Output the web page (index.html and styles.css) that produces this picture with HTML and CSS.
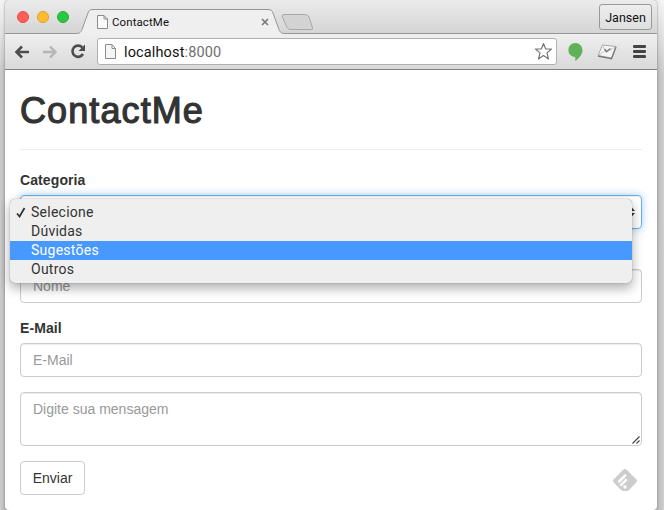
FILE: index.html
```html
<!DOCTYPE html>
<html lang="pt-BR">
<head>
<meta charset="utf-8">
<title>ContactMe</title>
<link rel="stylesheet" href="styles.css">
</head>
<body>
<div class="window">
  <header class="tabbar">
    <div class="lights"><i class="red"></i><i class="yellow"></i><i class="green"></i></div>
    <div class="tab">
      <svg class="tab-shape" width="212" height="26" viewBox="0 0 212 26">
        <path d="M-2 24.500C2 24.500 3 23 4 20.500L10 4C11 1.500 12 .5 15 .5H190C193 .5 194 1.500 195 4L201 20.500C202 23 203 24.500 207 24.500V26H-2Z" fill="#efefef"/>
        <path d="M-2 24.500C2 24.500 3 23 4 20.500L10 4C11 1.500 12 .5 15 .5H190C193 .5 194 1.500 195 4L201 20.500C202 23 203 24.500 207 24.500" fill="none" stroke="#969696"/>
      </svg>
      <svg class="doc" width="11" height="14" viewBox="0 0 11 14"><path d="M.5.500H7L10.500 4V13.500H.5ZM7 .5V4H10.500" fill="#fafafa" stroke="#8b8b8b"/></svg>
      <span class="tab-title">ContactMe</span>
      <svg class="close" width="8" height="8" viewBox="0 0 8 8"><path d="M1 1L7 7M7 1L1 7" stroke="#777" stroke-width="1.600"/></svg>
    </div>
    <svg class="newtab" width="34" height="17" viewBox="0 0 34 17"><path d="M3 .5H24Q27 .5 28 3L31.500 13.500Q32.500 15.500 30 15.500H10Q7 15.500 6 13.500L1.300 3Q.5.500 3 .5Z" fill="#d3d3d3" stroke="#a8a8a8"/></svg>
    <div class="profile">Jansen</div>
  </header>
  <nav class="toolbar">
    <svg class="back" width="16" height="14" viewBox="0 0 16 14"><path d="M15 7H3M8 1.500L2.500 7L8 12.500" fill="none" stroke="#4d4d4d" stroke-width="2.600"/></svg>
    <svg class="forward" width="16" height="14" viewBox="0 0 16 14"><path d="M1 7H13M8 1.500L13.500 7L8 12.500" fill="none" stroke="#b5b5b5" stroke-width="2.400"/></svg>
    <svg class="reload" width="16" height="15" viewBox="0 0 16 15"><path d="M12.300 3.500A5.600 5.600 0 1 0 13 10" fill="none" stroke="#4d4d4d" stroke-width="2.600"/><path d="M15 .5V7H8.500Z" fill="#4d4d4d"/></svg>
    <div class="address">
      <svg width="11" height="15" viewBox="0 0 11 15"><path d="M.5.500H7L10.500 4.500V14.500H.5ZM7 .5V4.500H10.500" fill="#f5f5f5" stroke="#8b8b8b"/></svg>
      <span class="url">localhost<span>:8000</span></span>
      <svg class="star" width="19" height="19" viewBox="0 0 19 19"><path d="M9.500 1.500L11.700 7H17.500L13 10.900L14.500 17L9.500 13.600L4.500 17L6 10.900L1.500 7H7.300Z" fill="#fff" stroke="#777" stroke-width="1.200" stroke-linejoin="round"/></svg>
    </div>
    <svg class="hangouts" width="15" height="18" viewBox="0 0 15 18"><path d="M7.300 0A7.100 7.100 0 0 1 14.500 7C14.500 11.500 11 15.500 7.300 18V14A7 7 0 0 1 7.300 0Z" fill="#60b157"/></svg>
    <svg class="mail" width="20" height="16" viewBox="0 0 20 16"><path d="M5.500 1L19 2.500L14.500 14L1 11.500Z" fill="#f4f4f4" stroke="#aaa"/><path d="M1 12L14.500 14.800L19 3" fill="none" stroke="#777" stroke-width="1.300"/><path d="M5.500 1L9 8.500L19 2.500M1 11.500L8 7" fill="none" stroke="#bbb" stroke-width=".7"/><path d="M7.500 5L9.500 7.500L13.500 4.500" fill="none" stroke="#777" stroke-width="1.300"/></svg>
    <svg class="menu" width="13" height="13" viewBox="0 0 13 13"><path d="M1.200 1.500H11.800M1.200 6.500H11.800M1.200 11.500H11.800" stroke="#464246" stroke-width="2.800" stroke-linecap="round"/></svg>
  </nav>
  <main>
    <h1>ContactMe</h1>
    <form>
      <div class="group">
        <label>Categoria</label>
        <div class="control select">
          <svg width="9" height="12" viewBox="0 0 9 12"><path d="M4.500 0L9 5H0ZM0 7H9L4.500 12Z" fill="#333"/></svg>
          <ul class="options">
            <li><svg class="check" width="10" height="11" viewBox="0 0 10 11"><path d="M1 6.500L3.600 9.500L8.500 1" fill="none" stroke="#333" stroke-width="1.800"/></svg>Selecione</li>
            <li>Dúvidas</li>
            <li class="active">Sugestões</li>
            <li>Outros</li>
          </ul>
        </div>
      </div>
      <div class="group covered">
        <div class="control">Nome</div>
      </div>
      <div class="group">
        <label>E-Mail</label>
        <div class="control">E-Mail</div>
      </div>
      <div class="group">
        <div class="control message">Digite sua mensagem
          <svg class="grip" width="8" height="8" viewBox="0 0 8 8"><path d="M.5 7.500L7.500.5M4.500 7.500L7.500 4.500" stroke="#444" stroke-width="1.200"/></svg>
        </div>
      </div>
      <div class="actions">
        <button type="button">Enviar</button>
        <svg width="24" height="22" viewBox="0 0 24 22"><path d="M10 1Q12 -.8 14 1L23.200 10.200Q24.600 12 23.200 13.500L16 21Q15 22 13.500 22H10.500Q9 22 8 21L.8 13.500Q-.6 12 .8 10.200Z" fill="#ccc"/><path d="M6 12.500L12.200 6.500M8 16L13 11.200" stroke="#fff" stroke-width="2.500" stroke-linecap="round"/><circle cx="12" cy="18" r="1.700" fill="#fff"/></svg>
      </div>
    </form>
  </main>
</div>
</body>
</html>
```
FILE: styles.css
```css
* { box-sizing: border-box; }
body {
  margin: 0;
  height: 510px;
  overflow: hidden;
  padding: 0 7px 0 5px;
  background: linear-gradient(90deg, #cdcdcd, #b8b8b8 5px, #b8b8b8 657px, #d0d0d0);
  font: 14px/20px "Liberation Sans", Arial, sans-serif;
  color: #333;
}
body::before {
  content: "";
  position: absolute;
  inset: 0 0 auto;
  height: 75px;
  background: linear-gradient(#fffc, #fff0);
}
.window {
  position: relative;
  height: 510px;
  background: #fff;
  border-radius: 5px 5px 4px 4px;
  box-shadow: 0 0 2px #777;
}
.tabbar {
  display: flex;
  height: 34px;
  background: linear-gradient(#ebebeb, #d5d5d5);
  border-bottom: 1px solid #969696;
  border-radius: 5px 5px 0 0;
}
.lights { display: flex; gap: 8px; padding: 11px 0 0 12px; width: 73px; }
.lights i { width: 12px; height: 12px; border-radius: 50%; }
.red { background: #ff5f57; border: 1px solid #e34b43; }
.yellow { background: #ffbd2e; border: 1px solid #dfa02b; }
.green { background: #28c940; border: 1px solid #24ad34; }
.tab {
  position: relative;
  display: flex;
  align-items: center;
  width: 208px;
  height: 26px;
  margin-top: 9px;
  padding: 0 17px 1px 19px;
  font: 11.400px/16px Roboto, sans-serif;
  color: #111;
}
.tab-shape { position: absolute; left: 0; top: 0; overflow: visible; }
.tab .doc, .tab-title, .close { position: relative; }
.tab-title { margin-left: 4px; letter-spacing: .15px; }
.close { margin-left: auto; }
.newtab { margin: 14px 0 0 -5px; }
.profile {
  width: 53px;
  height: 26px;
  margin: 4px 5px 0 auto;
  border: 1px solid #999;
  border-radius: 3px;
  background: linear-gradient(#ededed, #dfdfdf);
  font: 12.500px/25px Roboto, sans-serif;
  text-align: center;
  color: #111;
}
.toolbar {
  display: flex;
  align-items: center;
  height: 36px;
  padding: 0 11px 0 9px;
  background: linear-gradient(#efefef, #d9d9d9);
  border-bottom: 1px solid #7f7f7f;
}
.forward { margin-left: 12px; }
.reload { margin-left: 12px; }
.address {
  display: flex;
  align-items: center;
  width: 460px;
  height: 27px;
  margin-left: 11px;
  padding: 0 3px 0 7px;
  background: #fff;
  border: 1px solid #b1b1b1;
  border-radius: 3px;
}
.url { margin-left: 8px; padding-top: 2px; font: 14.500px/20px Roboto, sans-serif; color: #111; letter-spacing: .14px; }
.url span { color: #707070; }
.star { margin-left: auto; }
.hangouts { margin-left: 11px; }
.mail { margin-left: 14px; }
.menu { margin-left: auto; }
main { padding: 20px 15px 0; }
h1 {
  height: 60px;
  margin: 0 0 20px;
  padding-top: 1px;
  border-bottom: 1px solid #eee;
  font: 500 36px/40px "Liberation Sans", Arial, sans-serif;
  letter-spacing: 1.100px;
  -webkit-text-stroke: 1.200px #333;
}
.group { margin-bottom: 15px; }
.covered { padding-top: 25px; }
label { display: block; margin-bottom: 5px; font-weight: bold; letter-spacing: .1px; }
.control {
  position: relative;
  height: 34px;
  padding: 6px 12px;
  border: 1px solid #ccc;
  border-radius: 4px;
  box-shadow: inset 0 1px 1px #00000013;
  color: #999;
}
.select { border-color: #66afe9; box-shadow: inset 0 1px 1px #00000013, 0 0 8px #66afe999; }
.select > svg { position: absolute; right: 6px; top: 10px; }
.options {
  position: absolute;
  z-index: 2;
  left: -11px;
  top: 3px;
  width: 622px;
  height: 84px;
  margin: 0;
  padding: 4px 0;
  list-style: none;
  background: #efefef;
  border-radius: 5px;
  box-shadow: 0 0 1px #0008, 0 5px 12px #0005;
  font: 14px/19px Roboto, sans-serif;
  color: #333;
}
.options li { position: relative; height: 19px; padding-left: 21px; letter-spacing: .25px; }
.check { position: absolute; left: 6px; top: 4px; }
.options .active { background: #4899ff; color: #fff; }
.message { height: 54px; }
.grip { position: absolute; right: 1px; bottom: 1px; }
.actions { display: flex; justify-content: space-between; align-items: center; padding-right: 5px; }
.actions svg { margin-top: 4px; }
button {
  width: 65px;
  height: 34px;
  padding: 0;
  border: 1px solid #ccc;
  border-radius: 4px;
  background: #fff;
  font: 14px/20px "Liberation Sans", Arial, sans-serif;
  color: #333;
}
```
